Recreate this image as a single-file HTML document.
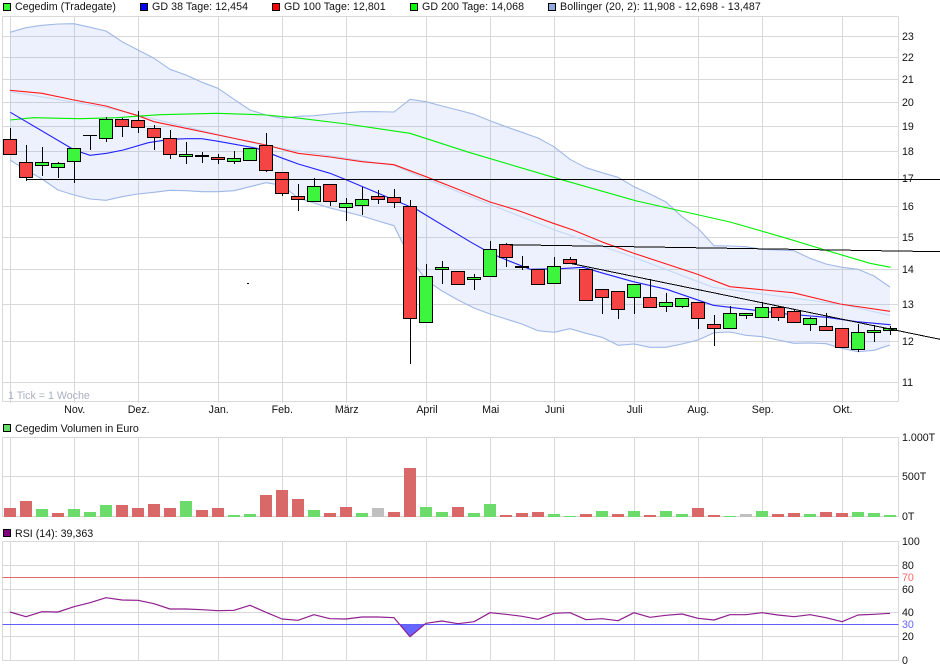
<!DOCTYPE html>
<html lang="de"><head><meta charset="utf-8"><title>Cegedim Chart</title>
<style>
html,body{margin:0;padding:0;background:#fff;width:940px;height:670px;overflow:hidden}
svg{display:block}
text{font-family:"Liberation Sans",sans-serif;font-size:10.67px;fill:#111}
.c text{text-anchor:middle}
.b rect{width:13px}
</style></head><body>
<svg width="940" height="670" viewBox="0 0 940 670" xmlns="http://www.w3.org/2000/svg">
<!-- legend -->
<g stroke="#000" stroke-width="1">
<rect x="3.5" y="3.5" width="7" height="7" fill="#33ff33"/>
<rect x="140.5" y="3.5" width="7" height="7" fill="#0000ff"/>
<rect x="272.5" y="3.5" width="7" height="7" fill="#ff0000"/>
<rect x="410.5" y="3.5" width="7" height="7" fill="#00ff00"/>
<rect x="548.5" y="3.5" width="7" height="7" fill="#8fa9dc"/>
<rect x="3.5" y="424.5" width="7" height="7" fill="#66dd66"/>
<rect x="3.5" y="529.5" width="7" height="7" fill="#800080"/>
</g>
<text x="15" y="10">Cegedim (Tradegate)</text>
<text x="152" y="10" style="letter-spacing:.05px">GD 38 Tage: 12,454</text>
<text x="284" y="10" style="letter-spacing:.03px">GD 100 Tage: 12,801</text>
<text x="422" y="10" style="letter-spacing:.05px">GD 200 Tage: 14,068</text>
<text x="560" y="10" style="letter-spacing:.09px">Bollinger (20, 2): 11,908 - 12,698 - 13,487</text>
<text x="15" y="432">Cegedim Volumen in Euro</text>
<text x="15" y="537">RSI (14): 39,363</text>

<!-- grid -->
<g stroke="#d9d9d9" stroke-width="1" fill="none">
<path d="M2.5 16.5H898.5M2.5 36.5H898.5M2.5 57.5H898.5M2.5 79.5H898.5M2.5 102.5H898.5M2.5 126.5H898.5M2.5 151.5H898.5M2.5 206.5H898.5M2.5 237.5H898.5M2.5 269.5H898.5M2.5 304.5H898.5M2.5 341.5H898.5M2.5 382.5H898.5M2.5 401.5H898.5"/>
<path d="M2.5 16.5V401.5M898.5 16.5V401.5M10.5 16.5V403M74.5 16.5V403M138.5 16.5V403M218.5 16.5V403M282.5 16.5V403M346.5 16.5V403M426.5 16.5V403M490.5 16.5V403M554.5 16.5V403M634.5 16.5V403M698.5 16.5V403M762.5 16.5V403M842.5 16.5V403"/>
<path d="M2.5 437.5H898.5M2.5 476.5H898.5M2.5 516.5H898.5M2.5 437.5V516.5M898.5 437.5V516.5M10.5 437.5V516.5M74.5 437.5V516.5M138.5 437.5V516.5M218.5 437.5V516.5M282.5 437.5V516.5M346.5 437.5V516.5M426.5 437.5V516.5M490.5 437.5V516.5M554.5 437.5V516.5M634.5 437.5V516.5M698.5 437.5V516.5M762.5 437.5V516.5M842.5 437.5V516.5"/>
<path d="M2.5 541.5H898.5M2.5 565.5H898.5M2.5 589.5H898.5M2.5 612.5H898.5M2.5 636.5H898.5M2.5 660.5H898.5M2.5 541.5V660.5M898.5 541.5V660.5M10.5 541.5V660.5M74.5 541.5V660.5M138.5 541.5V660.5M218.5 541.5V660.5M282.5 541.5V660.5M346.5 541.5V660.5M426.5 541.5V660.5M490.5 541.5V660.5M554.5 541.5V660.5M634.5 541.5V660.5M698.5 541.5V660.5M762.5 541.5V660.5M842.5 541.5V660.5"/>
</g>

<!-- bollinger fill -->
<path fill="#6a94f0" fill-opacity=".13" d="M10 32.3L26 27.7 42 25.3 58 24 74 23.7 90 27.3 106 31 122 41.7 138 50 154 58.3 170 69.3 186 75 202 82.3 218 88.3 234 99.3 250 110 266 115 282 118.3 298 116.3 314 115.7 330 114 346 112.7 362 111.7 378 111.7 394 112 410 99.3 426 101.7 442 106 458 110 474 114.3 490 120.7 506 126.7 522 132.3 538 138 554 146.7 570 159.3 586 167.7 602 172.7 618 177.3 634 186.7 650 194 666 202 682 216.7 698 228.3 714 245.7 730 246 746 246.7 762 249.3 778 250 794 250.7 810 258.3 826 264 842 267.3 858 269.3 874 276 890 287V345L874 350.3 858 351.7 842 348.3 826 343.7 810 343 794 343.3 778 340 762 336.7 746 335.3 730 332 714 332.7 698 340 682 344 666 347.3 650 347.3 634 344 618 345.3 602 337.3 586 333.3 570 328.7 554 332.3 538 330.7 522 324 506 319 490 314 474 308 458 300 442 291 426 280 410 258 394 225.7 378 221 362 216 346 212 330 208 314 203 298 198 282 185.3 266 182.7 250 186.7 234 190.7 218 191.7 202 191.7 186 190.7 170 190.3 154 192.3 138 194 122 196.7 106 200.3 90 199 74 195 58 190 42 179 26 170 10 160Z"/>
<g fill="none" stroke-width="1.1" stroke-linejoin="round">
<path stroke="#a0b8e6" d="M10 32.3L26 27.7 42 25.3 58 24 74 23.7 90 27.3 106 31 122 41.7 138 50 154 58.3 170 69.3 186 75 202 82.3 218 88.3 234 99.3 250 110 266 115 282 118.3 298 116.3 314 115.7 330 114 346 112.7 362 111.7 378 111.7 394 112 410 99.3 426 101.7 442 106 458 110 474 114.3 490 120.7 506 126.7 522 132.3 538 138 554 146.7 570 159.3 586 167.7 602 172.7 618 177.3 634 186.7 650 194 666 202 682 216.7 698 228.3 714 245.7 730 246 746 246.7 762 249.3 778 250 794 250.7 810 258.3 826 264 842 267.3 858 269.3 874 276 890 287"/>
<path stroke="#a0b8e6" d="M890 345L874 350.3 858 351.7 842 348.3 826 343.7 810 343 794 343.3 778 340 762 336.7 746 335.3 730 332 714 332.7 698 340 682 344 666 347.3 650 347.3 634 344 618 345.3 602 337.3 586 333.3 570 328.7 554 332.3 538 330.7 522 324 506 319 490 314 474 308 458 300 442 291 426 280 410 258 394 225.7 378 221 362 216 346 212 330 208 314 203 298 198 282 185.3 266 182.7 250 186.7 234 190.7 218 191.7 202 191.7 186 190.7 170 190.3 154 192.3 138 194 122 196.7 106 200.3 90 199 74 195 58 190 42 179 26 170 10 160"/>
<path stroke="#c6d8f6" d="M10 91.7L106 107.5 266 146 394 165.5 426 179 470 196.5 553 229.3 633 257 713 287.3 845 305 890 315.3"/>
<path stroke="#ff1a1a" d="M10 90.3L42 93.3 74 100 106 106 138 115.7 154 121.7 186 128.3 218 135 266 145 298 153.3 330 157 362 161.7 394 164.7 426 176.7 470 194 490 202 516.7 210 553.3 223.3 573 230 603 242.3 633 253 696.7 274 730 286.7 793 292.7 840 304 890 311.3"/>
<path stroke="#00f000" d="M10.3 120L33 117.7 80 118.7 116.7 117.7 160 114.7 216.7 113.3 266.7 115 300 118.3 346.7 124 410 133.3 470 152.7 553.3 177.3 636.7 201 676.7 210 730 222 786.7 238.3 825 250 870 263.3 890.7 267.3"/>
<path stroke="#2222ff" d="M10.3 112.3L74.3 150 90 155.3 106.7 153.3 123.3 150 148.3 142.7 170 139.3 186.7 138.7 201.7 138.7 218.3 141.3 256.7 148.3 282.7 158.3 298.3 164 330 173.3 346.7 180 380 194 416.7 209.5 470 241.7 490 253 506.7 260 530 269.3 560 268.7 583.3 267.3 603.3 273.3 633.3 281.7 666.7 289.3 713.3 305.3 746.7 309.3 786.7 314 826.7 317.3 856.7 321.7 890.7 324.7"/>
</g>

<!-- candles -->
<g fill="none" stroke="#000" stroke-width="1">
<path d="M10.5 128V155M26.5 145V181M42.5 147V176M58.5 162V178M74.5 148V183M90.5 135V150M83 135.5H97M106.5 117V142M122.5 118V137M138.5 111V133M154.5 125V150M170.5 130V159M186.5 142V164M202.5 152V163M218.5 154V164M234.5 151V164M266.5 133V172M282.5 172V196M298.5 184V211M314.5 178V201M330.5 184V206M346.5 198V221M362.5 187V215M378.5 190V204M394.5 189V208M410.5 200V364M426.5 264V322M442.5 261V284M474.5 274V290M490.5 241V276M506.5 243V267M522.5 256V270M554.5 257V283M570.5 257V264M602.5 289V314M618.5 291V319M634.5 284V314M650.5 279V307M666.5 293V312M682.5 298V308M698.5 302V329M714.5 315V346M730.5 306V328M746.5 313V319M762.5 302V317M778.5 306V321M794.5 309V322M810.5 317V331M826.5 313V330M858.5 324V352M874.5 325V342M890.5 326V335"/>
</g>
<g class="b" transform="translate(-1 0)" fill="#f44444" stroke="#000" stroke-width="1">
<rect x="4.5" y="139.5" height="15"/>
<rect x="20.5" y="162.5" height="15"/>
<rect x="116.5" y="119.5" height="7"/>
<rect x="132.5" y="120.5" height="7"/>
<rect x="148.5" y="128.5" height="9"/>
<rect x="164.5" y="138.5" height="16"/>
<rect x="212.5" y="157.5" height="2"/>
<rect x="260.5" y="145.5" height="25"/>
<rect x="276.5" y="172.5" height="21"/>
<rect x="292.5" y="196.5" height="3"/>
<rect x="324.5" y="184.5" height="17"/>
<rect x="372.5" y="196.5" height="3"/>
<rect x="388.5" y="197.5" height="5"/>
<rect x="404.5" y="206.5" height="112"/>
<rect x="452.5" y="271.5" height="13"/>
<rect x="500.5" y="244.5" height="13"/>
<rect x="532.5" y="269.5" height="15"/>
<rect x="564.5" y="259.5" height="4"/>
<rect x="580.5" y="269.5" height="31"/>
<rect x="596.5" y="289.5" height="8"/>
<rect x="612.5" y="291.5" height="18"/>
<rect x="644.5" y="297.5" height="10"/>
<rect x="692.5" y="302.5" height="16"/>
<rect x="708.5" y="324.5" height="4"/>
<rect x="772.5" y="307.5" height="10"/>
<rect x="788.5" y="311.5" height="11"/>
<rect x="820.5" y="326.5" height="4"/>
<rect x="836.5" y="328.5" height="19"/>
</g>
<g class="b" transform="translate(-1 0)" fill="#3cf53c" stroke="#000" stroke-width="1">
<rect x="36.5" y="162.5" height="3"/>
<rect x="52.5" y="163.5" height="4"/>
<rect x="68.5" y="148.5" height="13"/>
<rect x="100.5" y="119.5" height="19"/>
<rect x="180.5" y="154.5" height="2"/>
<rect x="228.5" y="158.5" height="3"/>
<rect x="244.5" y="148.5" height="12"/>
<rect x="308.5" y="186.5" height="15"/>
<rect x="340.5" y="203.5" height="4"/>
<rect x="356.5" y="199.5" height="6"/>
<rect x="420.5" y="276.5" height="46"/>
<rect x="436.5" y="267.5" height="2"/>
<rect x="468.5" y="277.5" height="2"/>
<rect x="484.5" y="249.5" height="27"/>
<rect x="548.5" y="266.5" height="17"/>
<rect x="628.5" y="284.5" height="13"/>
<rect x="660.5" y="302.5" height="4"/>
<rect x="676.5" y="298.5" height="8"/>
<rect x="724.5" y="313.5" height="15"/>
<rect x="740.5" y="313.5" height="2"/>
<rect x="756.5" y="307.5" height="10"/>
<rect x="804.5" y="318.5" height="6"/>
<rect x="852.5" y="332.5" height="17"/>
<rect x="868.5" y="330.5" height="2"/>
<rect x="884.5" y="328.5" height="2"/>
</g>
<g class="b" transform="translate(-1 0)" fill="#000" stroke="#000" stroke-width="1">
<rect x="196.5" y="155.5" height="1"/>
<rect x="516.5" y="266.5" height="1"/>
</g>
<rect x="247" y="283" width="2" height="1" fill="#000"/>

<!-- trend lines -->
<g fill="none" stroke="#000" stroke-width="1" shape-rendering="crispEdges">
<path d="M26 179.5H940"/>
<path d="M506.7 244.7L940 251.7"/>
<path d="M570 263.3L940 339.3"/>
</g>

<text x="8" y="399" style="fill:#a8b0c0">1 Tick = 1 Woche</text>

<!-- x labels -->
<g class="c">
<text x="74.7" y="413">Nov.</text><text x="138.7" y="413">Dez.</text><text x="218.7" y="413">Jan.</text><text x="282.3" y="413">Feb.</text><text x="346.7" y="413">März</text><text x="427" y="413">April</text><text x="490.7" y="413">Mai</text><text x="554.7" y="413">Juni</text><text x="634.7" y="413">Juli</text><text x="698.3" y="413">Aug.</text><text x="762.7" y="413">Sep.</text><text x="842.7" y="413">Okt.</text>
</g>

<!-- y labels -->
<text x="902" y="40">23</text><text x="902" y="61">22</text><text x="902" y="83">21</text><text x="902" y="106">20</text><text x="902" y="130">19</text><text x="902" y="155">18</text><text x="902" y="182">17</text><text x="902" y="210">16</text><text x="902" y="241">15</text><text x="902" y="273">14</text><text x="902" y="308">13</text><text x="902" y="345">12</text><text x="902" y="386">11</text>
<text x="902" y="441">1.000T</text><text x="902" y="480">500T</text><text x="902" y="520">0T</text>
<text x="902" y="545">100</text><text x="902" y="569">80</text><text x="902" y="581" style="fill:#ff6666">70</text><text x="902" y="593">60</text><text x="902" y="616">40</text><text x="902" y="628" style="fill:#6666ff">30</text><text x="902" y="640">20</text><text x="902" y="664">0</text>

<!-- volume -->
<path fill="#d96969" d="M4 508h12v9h-12zM20 501h12v16h-12zM52 513h12v4h-12zM116 505h12v12h-12zM132 508h12v9h-12zM148 504h12v13h-12zM164 508h12v9h-12zM196 510h12v7h-12zM212 508h12v9h-12zM260 495h12v22h-12zM276 490h12v27h-12zM292 499h12v18h-12zM324 513h12v4h-12zM340 507h12v10h-12zM388 512h12v5h-12zM404 468h12v49h-12zM452 507h12v10h-12zM500 515h12v2h-12zM516 513h12v4h-12zM532 512h12v5h-12zM580 514h12v3h-12zM612 514h12v3h-12zM644 515h12v2h-12zM692 508h12v9h-12zM708 515h12v2h-12zM772 514h12v3h-12zM788 513h12v4h-12zM820 512h12v5h-12zM836 513h12v4h-12z"/>
<path fill="#6bdc6b" d="M36 509h12v8h-12zM68 509h12v8h-12zM84 512h12v5h-12zM100 505h12v12h-12zM180 501h12v16h-12zM228 515h12v2h-12zM244 514h12v3h-12zM308 510h12v7h-12zM356 513h12v4h-12zM420 507h12v10h-12zM436 512h12v5h-12zM468 513h12v4h-12zM484 504h12v13h-12zM548 514h12v3h-12zM564 516h12v1h-12zM596 511h12v6h-12zM628 511h12v6h-12zM660 511h12v6h-12zM676 514h12v3h-12zM724 516h12v1h-12zM756 511h12v6h-12zM804 514h12v3h-12zM852 512h12v5h-12zM868 513h12v4h-12zM884 515h12v2h-12z"/>
<path fill="#c0c0c0" d="M372 508h12v9h-12zM740 514h12v3h-12z"/>

<!-- RSI -->
<path d="M399.7 624.5L410 636.7 425 624.5Z" fill="#6666ff"/>
<path d="M2.5 577.5H898.5" stroke="#e06a6a" stroke-width="1"/>
<path d="M2.5 624.5H898.5" stroke="#6060ff" stroke-width="1"/>
<path fill="none" stroke="#8f1f8f" stroke-width="1.2" stroke-linejoin="round" d="M10 612L26 616.7 42 611.7 58 612 74 606.7 90 602.7 106 597.7 122 600 138 600.3 154 603.7 170 609 186 609 202 609.7 218 610.7 234 610.3 250 605.3 266 612.3 282 619 298 620.3 314 614.7 330 618.7 346 619 362 617 378 617 394 617.7 410 636.7 426 623.3 442 621 458 623.7 474 621.7 490 612.7 506 614.3 522 616.3 538 619.3 554 613.3 570 612.7 586 619.7 602 618.7 618 620.7 634 612.7 650 617.3 666 615.3 682 614 698 618.3 714 620 730 614.7 746 614.7 762 612.7 778 615 794 616.7 810 614.7 826 617.7 842 621.7 858 615 874 614.3 890 613.3"/>
</svg>
</body></html>
